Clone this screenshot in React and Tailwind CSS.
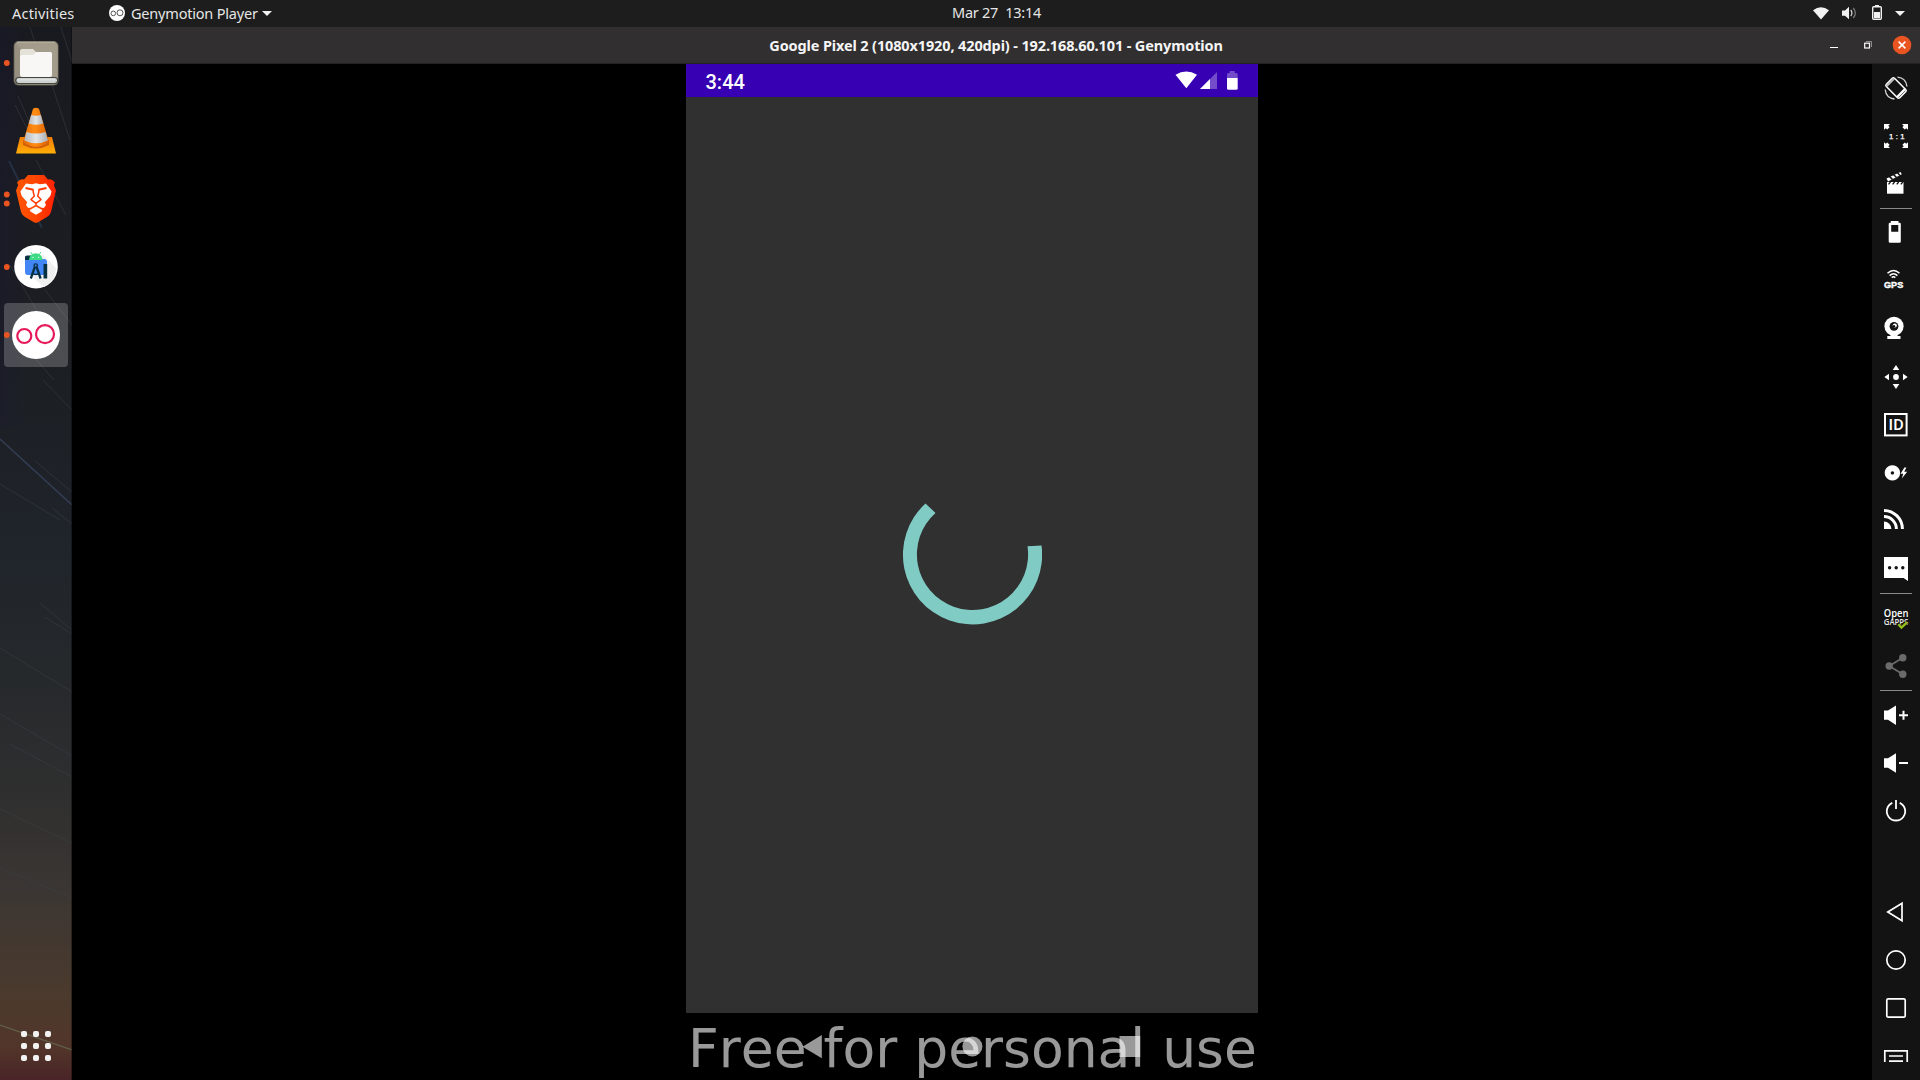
import React from "react";

const W = "#ffffff";

/* ---------- top panel ---------- */

function TopBar() {
  return (
    <header className="grid h-[27px] shrink-0 grid-cols-[1fr_auto_1fr] items-center bg-[#1d1d1d] text-[14.5px] leading-none text-[#e6e6e6]">
      <div className="flex items-center">
        <span className="-mt-px ml-3 w-[97px] whitespace-nowrap tracking-[0.2px]">Activities</span>
        <svg className="-mt-px h-4 w-4" viewBox="0 0 16 16">
          <circle cx="8" cy="8" r="8" fill="#fff" />
          <circle cx="4.3" cy="8.4" r="2.3" fill="none" stroke="#444" strokeWidth="0.9" />
          <circle cx="11" cy="7.8" r="3" fill="none" stroke="#444" strokeWidth="0.9" />
        </svg>
        <span className="-mt-px ml-1.5 w-[131px] whitespace-nowrap tracking-[-0.2px]">Genymotion Player</span>
        <svg className="h-[5px] w-[10px]" viewBox="0 0 10 5"><path d="M0 0H10L5 5Z" fill="#f2f2f2" /></svg>
      </div>
      <span className="-mt-[2px] mr-[-73px] whitespace-pre tracking-[-0.25px]">Mar 27  13:14</span>
      <svg className="ml-auto h-[27px] w-[120px]" viewBox="1800 0 120 27" fill="#f2f2f2">
        <path d="M1813 10.3Q1821 4 1829 10.3L1821 19.5Z" />
        <path d="M1842 10.5H1845L1849 6.8V19.2L1845 15.8H1842Z" />
        <path d="M1850.8 10Q1853 13 1850.8 16" fill="none" stroke="#cfcfcf" strokeWidth="1.3" />
        <path d="M1853.3 8Q1857.4 13 1853.3 18" fill="none" stroke="#777" strokeWidth="1.3" />
        <rect x="1872.7" y="6.7" width="8.6" height="12.6" rx="1" fill="none" stroke="#f2f2f2" strokeWidth="1.4" />
        <rect x="1875" y="5" width="4" height="2" />
        <rect x="1874" y="12" width="6" height="6" />
        <path d="M1895 11H1905L1900 16Z" />
      </svg>
    </header>
  );
}

/* ---------- dock ---------- */

function DockSky() {
  return (
    <svg className="absolute inset-0 h-full w-full" viewBox="0 27 72 1053" fill="none">
      <defs>
        <linearGradient id="sky" x1="0" y1="0" x2="0" y2="1">
          <stop offset="0" stopColor="#191a20" />
          <stop offset="0.3" stopColor="#1b1e23" />
          <stop offset="0.5" stopColor="#20252b" />
          <stop offset="0.62" stopColor="#26292c" />
          <stop offset="0.73" stopColor="#2f2f2f" />
          <stop offset="0.82" stopColor="#3b3633" />
          <stop offset="0.92" stopColor="#4b3a2d" />
          <stop offset="0.97" stopColor="#52352a" />
          <stop offset="1" stopColor="#4a2427" />
        </linearGradient>
        <linearGradient id="skyLeft" x1="0" y1="0" x2="1" y2="0">
          <stop offset="0" stopColor="#1a1830" stopOpacity="0.4" />
          <stop offset="0.35" stopColor="#1a1830" stopOpacity="0" />
        </linearGradient>
      </defs>
      <rect y="27" width="72" height="1053" fill="url(#sky)" />
      <rect y="27" width="72" height="400" fill="url(#skyLeft)" />
      <g stroke="#3d4148" strokeWidth="1" opacity="0.5">
        <path d="M30 27L40 58M61 27L72 62M18 96L32 128M15 105L38 150M52 85L70 140M36 160L66 215M10 265L60 350M45 290L72 325M28 350L54 380" />
        <path d="M43 380L72 410M35 461L72 492M52 508L72 524M0 484L60 520M40 603L72 630M45 617L72 634M0 648L72 692" />
        <path d="M0 714L72 756M10 744L72 777M0 809L72 843M0 868L72 898" />
      </g>
      <path d="M9 161L42 228" stroke="#2d4560" strokeWidth="2" opacity="0.5" />
      <path d="M0 439L72 505" stroke="#353e57" strokeWidth="1.3" />
      <path d="M0 1025L72 1050" stroke="#625f4a" strokeWidth="1.2" />
      <rect x="71" y="27" width="1" height="1053" fill="#000" fillOpacity="0.35" />
    </svg>
  );
}

function DockItem({ dots = [], active = false, children }) {
  return (
    <svg className="h-[68px] w-[72px] shrink-0" viewBox="0 0 72 68">
      {active && <rect x="4" y="2" width="64" height="64" rx="4" fill="#fff" fillOpacity="0.21" />}
      {children}
      {dots.map((y) => (
        <circle key={y} cx="6.8" cy={y} r="2.9" fill="#e95420" />
      ))}
    </svg>
  );
}

function Dock() {
  return (
    <aside className="relative flex w-[72px] shrink-0 flex-col pt-[2px]">
      <DockSky />
      <div className="relative flex flex-1 flex-col">
        <DockItem dots={[34]}>
          <defs>
            <linearGradient id="filesBg" x1="0" y1="1" x2="1" y2="0">
              <stop offset="0.48" stopColor="#979080" />
              <stop offset="0.52" stopColor="#a49c8b" />
            </linearGradient>
          </defs>
          <rect x="13.6" y="12" width="45" height="44.6" rx="5" fill="#5f5c50" />
          <rect x="14.4" y="12.8" width="43.4" height="43" rx="4.4" fill="url(#filesBg)" />
          <path d="M17 13.2H55" stroke="#c1baa9" strokeWidth="0.8" />
          <path d="M20 22Q20 20 22 20H33L36 23H50Q52 23 52 25V30H20Z" fill="#e4e1d8" />
          <path d="M20 27.5Q20 26 22 26H33L36.5 23H50Q52 23 52 25V45.5Q52 48 50 48H22Q20 48 20 45.5Z" fill="#f8f7f6" />
          <rect x="15.7" y="48.5" width="42" height="6" rx="3" fill="#cdd1d0" stroke="#45463f" strokeWidth="1.2" />
          <rect x="18" y="50" width="37" height="1.5" fill="#dde0df" />
        </DockItem>
        <DockItem>
          <defs>
            <linearGradient id="coneO" x1="0" x2="1" y1="0" y2="0">
              <stop offset="0" stopColor="#e36b05" />
              <stop offset="0.45" stopColor="#ff8d14" />
              <stop offset="1" stopColor="#d95f02" />
            </linearGradient>
            <linearGradient id="coneBase" x1="0" x2="0" y1="0" y2="1">
              <stop offset="0" stopColor="#f27c05" />
              <stop offset="1" stopColor="#ffae08" />
            </linearGradient>
            <linearGradient id="coneW" x1="0" x2="1" y1="0" y2="0">
              <stop offset="0" stopColor="#b5b9bc" />
              <stop offset="0.5" stopColor="#e2e4e6" />
              <stop offset="1" stopColor="#a9adb0" />
            </linearGradient>
          </defs>
          <path d="M20 40H52L56 56.5H16Z" fill="url(#coneBase)" />
          <path d="M23 43H49V48Q36 55 23 48Z" fill="#d2600b" />
          <path d="M33 11.8Q36 9.8 39 11.8L49 45Q36 54.5 23 45Z" fill="url(#coneO)" />
          <path d="M31.2 18Q36 19.4 40.8 18L43.3 26.6Q36 29 28.7 26.6Z" fill="url(#coneW)" />
          <path d="M26.5 35Q36 38 45.5 35L48 43.5Q36 49 24.3 43.5Z" fill="url(#coneW)" />
        </DockItem>
        <DockItem dots={[29.5, 38.5]}>
          <defs>
            <linearGradient id="brave" x1="0" x2="1" y1="0" y2="0">
              <stop offset="0" stopColor="#ff5601" />
              <stop offset="0.5" stopColor="#ff4500" />
              <stop offset="1" stopColor="#ff1f02" />
            </linearGradient>
          </defs>
          <path d="M28 10H44L48 14.5Q52 13.5 55 17.5L53.8 20L56 25.5L51 47Q50 50 47 52L38 57.2Q36 58.4 34 57.2L25 52Q22 50 21 47L16 25.5L18.2 20L17 17.5Q20 13.5 24 14.5Z" fill="url(#brave)" />
          <path d="M26 18.6L32 19.2L36 18.2L40 19.2L46 18.6L51.6 26.5L50.3 31L44.8 37.2L46 40L43.8 43L41 42.6L36 39.6L31 42.6L28.2 43L26 40L27.2 37.2L21.7 31L20.4 26.5Z" fill="#fff" />
          <path d="M29.8 45L36 41.6L42.2 45L41.6 46.5L36 49.8L30.4 46.5Z" fill="#fff" />
          <g fill="none" stroke="#ff3d0a" strokeLinejoin="round">
            <path d="M33.2 24.5L33.2 27L34.3 31L31 34.6L36 38.4L41 34.6L37.7 31L38.8 27L38.8 24.5" strokeWidth="1.5" />
            <path d="M25.5 23L33.4 24.8M46.5 23L38.6 24.8" strokeWidth="2.2" />
            <path d="M36 37.5V40" strokeWidth="1.4" />
          </g>
        </DockItem>
        <DockItem dots={[34]}>
          <circle cx="36" cy="33.7" r="21.8" fill="#fff" />
          <path d="M42 21L56 35Q56 48 44 54L30 42Z" fill="#f0f0f0" />
          <path d="M25 24Q25 22.5 27 22.5H31V27H25Z" fill="#073042" />
          <path d="M25 27H31L34 26H44Q47 26 47 29V39Q47 42 44 42H28Q25 42 25 39Z" fill="#4285f4" />
          <path d="M29 27Q29.5 20.5 35.8 20.3Q42 20.5 42.5 27Z" fill="#3ddc84" />
          <path d="M30.7 19L32.4 21.7M40.8 19L39.2 21.7" stroke="#3ddc84" strokeWidth="0.9" />
          <circle cx="33" cy="24.4" r="0.6" fill="#fff" /><circle cx="38.6" cy="24.4" r="0.6" fill="#fff" />
          <rect x="43.5" y="31" width="3.7" height="14.5" fill="#073042" />
          <g fill="none" stroke="#073042">
            <circle cx="35.7" cy="32.5" r="1.7" strokeWidth="1.3" />
            <path d="M34.8 34L30.8 45.5M36.6 34L40.6 45.5" strokeWidth="2.3" />
            <path d="M32 40Q35.7 43 39.4 40" strokeWidth="1.6" />
          </g>
        </DockItem>
        <DockItem dots={[34]} active>
          <circle cx="36" cy="34" r="24" fill="#fff" />
          <g fill="none" stroke="#e6195a" strokeWidth="2.2">
            <circle cx="24.3" cy="35" r="7" />
            <circle cx="45" cy="33.2" r="9" />
          </g>
        </DockItem>
        <div className="mx-auto mb-[19px] mt-auto grid grid-cols-3 gap-[6px]">
          {Array.from({ length: 9 }, (_, i) => (
            <span key={i} className="h-1.5 w-1.5 rounded-[2px] bg-[#f2f2f2]" />
          ))}
        </div>
      </div>
    </aside>
  );
}

/* ---------- window title bar ---------- */

function TitleBar() {
  return (
    <div className="grid h-[37px] shrink-0 grid-cols-[1fr_auto_1fr] items-center border-b border-[#232122] bg-[#322f30]">
      <span />
      <h1 className="mt-px whitespace-nowrap text-[14.5px] font-bold leading-none tracking-[-0.13px] text-[#f5f5f5]">
        Google Pixel 2 (1080x1920, 420dpi) - 192.168.60.101 - Genymotion
      </h1>
      <svg className="ml-auto h-[36px] w-[120px]" viewBox="1800 27 120 36" fill="none">
        <path d="M1830 47.5H1838" stroke="#fff" />
        <path d="M1866 41.5H1871.5V47" stroke="#8f8d8e" />
        <rect x="1864.7" y="43.2" width="4.8" height="4.8" stroke="#fff" strokeWidth="1.2" />
        <circle cx="1902" cy="45" r="9.3" fill="#e95420" />
        <path d="M1898.6 41.6L1905.4 48.4M1905.4 41.6L1898.6 48.4" stroke="#fff" strokeWidth="1.5" />
      </svg>
    </div>
  );
}

/* ---------- phone ---------- */

function Phone() {
  return (
    <section className="flex w-[572px] flex-col">
      <div className="flex h-[33px] items-center justify-between bg-[#3700b3] pl-[19.5px]">
        <span className="mt-0.5 font-[Roboto] text-[20px] font-medium leading-none text-white">3:44</span>
        <svg className="h-[33px] w-[98px]" viewBox="1160 64 98 33" fill="#fff">
          <path d="M1175.5 74.7Q1186.3 68.2 1197 74.7L1186.3 88.3Z" />
          <path d="M1217 72V89H1200Z" fillOpacity="0.3" />
          <path d="M1210 79V89H1200Z" />
          <path d="M1227 74.5Q1227 73 1228.5 73H1229.7V71H1234.7V73H1236.3Q1237.7 73 1237.7 74.5V78H1227Z" fillOpacity="0.3" />
          <path d="M1227 78H1237.7V88.4Q1237.7 89.8 1236.3 89.8H1228.5Q1227 89.8 1227 88.4Z" />
        </svg>
      </div>
      <div className="flex h-[916px] items-center justify-center bg-[#303030]">
        <svg className="h-[140px] w-[140px]" viewBox="902.2 484.8 140 140">
          <path
            d="M1041.7 545.2A69.6 69.6 0 1 1 925.7 503.3L935.7 512.7A55.6 55.6 0 1 0 1027.7 546Z"
            fill="#80cbc4"
          />
        </svg>
      </div>
      <div className="relative h-[67px] bg-black">
        <svg className="absolute inset-0 h-full w-full" viewBox="686 1013 572 67" fill="#fff" fillOpacity="0.6">
          <path d="M802.5 1046.7L821.8 1035V1058.3Z" />
          <circle cx="972.4" cy="1046.5" r="10" />
          <rect x="1119.5" y="1036" width="20.7" height="21" />
        </svg>
        <p className="absolute left-0 top-[4px] whitespace-nowrap pl-0.5 font-['DejaVu_Sans'] text-[53.5px] leading-[64px] text-white/60 [font-kerning:none]">
          Free for personal use
        </p>
      </div>
    </section>
  );
}

/* ---------- emulator toolbar ---------- */

function Tool({ children }) {
  return (
    <svg className="h-12 w-12 shrink-0" viewBox="0 0 48 48" fill="none">
      {children}
    </svg>
  );
}

function Separator() {
  return <div className="mx-2 h-px shrink-0 bg-[#8a8a8a]" />;
}

function Toolbar() {
  return (
    <aside className="flex w-12 shrink-0 flex-col bg-[#131313]">
      <Tool>
        <g transform="rotate(-45 24 24)">
          <rect x="18.2" y="14.5" width="11.6" height="19" rx="1.6" stroke={W} strokeWidth="1.5" />
          <path d="M18.5 31.2H29.5" stroke={W} strokeWidth="2.4" />
          <path d="M18.5 16H29.5" stroke="#bbb" strokeWidth="2" />
        </g>
        <path d="M25.5 13.2Q34 14 35 22.5M22.5 35Q14 34 13.2 25.5" stroke="#d8d8d8" strokeWidth="1.3" />
      </Tool>
      <Tool>
        <g fill={W}>
          <path d="M12 12H18L16.3 13.8L17.6 15.2L15.2 17.4L13.8 16.2L12 17.8Z" />
          <path d="M36 12H30L31.7 13.8L30.4 15.2L32.8 17.4L34.2 16.2L36 17.8Z" />
          <path d="M12 36H18L16.3 34.2L17.6 32.8L15.2 30.6L13.8 31.8L12 30.2Z" />
          <path d="M36 36H30L31.7 34.2L30.4 32.8L32.8 30.6L34.2 31.8L36 30.2Z" />
          <text x="17" y="26.8" fontFamily="Liberation Sans" fontSize="7.8" textLength="15.5" stroke={W} strokeWidth="0.25">1 : 1</text>
        </g>
      </Tool>
      <Tool>
        <path d="M15 22H31.5V33.7H15Z" fill={W} />
        <path d="M14.5 18.5L28.5 12L29.8 14.2L16 21.4Z" fill={W} />
        <path d="M17.4 16.4L20.4 19.4M21.5 14.5L24.5 17.5M25.5 12.7L28 15.4" stroke="#131313" strokeWidth="1.5" />
        <path d="M16.5 24.4L18.5 22M20.6 24.4L22.6 22M24.7 24.4L26.7 22M28.8 24.4L30.8 22" stroke="#131313" strokeWidth="1.3" />
      </Tool>
      <Separator />
      <Tool>
        <path fillRule="evenodd" d="M18.8 12H26.5V13.8H27.5Q28.8 13.8 28.8 15V32.5Q28.8 33.8 27.5 33.8H18Q16.7 33.8 16.7 32.5V15Q16.7 13.8 18 13.8H18.8ZM19.2 16V22.8H26.3V16Z" fill={W} />
      </Tool>
      <Tool>
        <path d="M15.5 16.3Q21.5 10.7 27.5 16.3M17.6 18.6Q21.5 14.8 25.4 18.6M19.7 20.6Q21.5 19 23.3 20.6" stroke={W} strokeWidth="1.5" />
        <text x="12" y="30.7" fontFamily="Liberation Sans" fontWeight="bold" fontSize="8.6" textLength="19.2" lengthAdjust="spacingAndGlyphs" fill={W} stroke={W} strokeWidth="0.4">GPS</text>
      </Tool>
      <Tool>
        <circle cx="22" cy="21.3" r="9.6" fill={W} />
        <circle cx="22" cy="21.3" r="4.4" fill="#131313" />
        <circle cx="22.8" cy="20.5" r="2.1" fill={W} />
        <circle cx="22" cy="21.3" r="1.2" fill="#131313" />
        <path d="M18.5 29H25.5V31H28.5V34H15.3V31H18.5Z" fill={W} />
      </Tool>
      <Tool>
        <g fill={W}>
          <circle cx="24" cy="24" r="2.9" />
          <path d="M24 12L27.3 17H20.7ZM24 36L27.3 31H20.7ZM12.3 24L17 20.8V27.2ZM35.7 24L31 20.8V27.2Z" />
        </g>
      </Tool>
      <Tool>
        <rect x="13" y="13" width="21.6" height="21.4" stroke={W} strokeWidth="2" />
        <text x="16.6" y="29.4" fontFamily="Roboto" fontWeight="500" fontSize="15.5" textLength="15" lengthAdjust="spacingAndGlyphs" fill={W}>ID</text>
      </Tool>
      <Tool>
        <path fillRule="evenodd" d="M20.4 16.2A7.7 7.7 0 1 1 20.39 16.2ZM20.4 22.2A1.7 1.7 0 1 0 20.41 22.2Z" fill={W} />
        <path d="M32.4 18.6L28.5 24.8H31.3L29.8 29.4L35.2 22.8H32.2L34.4 18.6Z" fill={W} />
      </Tool>
      <Tool>
        <g stroke={W} strokeWidth="3">
          <path d="M12 13.4A18.6 18.6 0 0 1 30.4 32" />
          <path d="M12 19.6A12.4 12.4 0 0 1 24.4 32" />
        </g>
        <path d="M12 24.6A7.4 7.4 0 0 1 19.4 32H12Z" fill={W} />
      </Tool>
      <Tool>
        <path d="M12 12H36V36L31.6 33H12Z" fill={W} />
        <g fill="#131313"><circle cx="17.6" cy="22.7" r="1.7" /><circle cx="24.2" cy="22.7" r="1.7" /><circle cx="30.8" cy="22.7" r="1.7" /></g>
      </Tool>
      <Separator />
      <Tool>
        <text x="11.8" y="22.8" fontFamily="Open Sans" fontWeight="600" fontSize="10" textLength="24.6" lengthAdjust="spacingAndGlyphs" fill={W}>Open</text>
        <text x="11.8" y="31" fontFamily="Open Sans" fontWeight="600" fontSize="8" textLength="24.6" lengthAdjust="spacingAndGlyphs" fill="#e8e8e8">GAPPS</text>
        <path d="M26.3 30.3L29.4 33.6L35 28.3" stroke="#131313" strokeWidth="3" />
        <path d="M26.3 30.3L29.4 33.6L35 28.3" stroke="#95c11f" strokeWidth="2.3" />
      </Tool>
      <Tool>
        <g fill="#6b6b6b"><circle cx="30.8" cy="15.8" r="3.7" /><circle cx="30.8" cy="32.2" r="3.7" /><circle cx="17.2" cy="24" r="3.7" /></g>
        <path d="M30.8 15.8L17.2 24L30.8 32.2" stroke="#6b6b6b" strokeWidth="1.7" />
      </Tool>
      <Separator />
      <Tool>
        <path d="M12 19.5H16L24 14.5V34L16 28.7H12Z" fill={W} />
        <path d="M27 24.3H36M31.5 19.8V28.8" stroke={W} strokeWidth="2" />
      </Tool>
      <Tool>
        <path d="M12 19.3H16L24 14.2V33.8L16 28.7H12Z" fill={W} />
        <path d="M27 24H36" stroke={W} strokeWidth="2" />
      </Tool>
      <Tool>
        <path d="M20.3 15.9A9.2 9.2 0 1 0 27.7 15.9M24 13V22" stroke={W} strokeWidth="1.8" />
      </Tool>
      <div className="flex-1" />
      <Tool><path d="M15.8 24L30 15.2V32.8Z" stroke={W} strokeWidth="1.7" /></Tool>
      <Tool><circle cx="24" cy="24" r="9.2" stroke={W} strokeWidth="1.7" /></Tool>
      <Tool><rect x="14.8" y="14.8" width="18.4" height="18.4" rx="1.5" stroke={W} strokeWidth="1.7" /></Tool>
      <Tool>
        <path d="M12.8 30V18.9H35.2V30M17 24H31M17 29.2H31" stroke={W} strokeWidth="1.7" />
      </Tool>
    </aside>
  );
}

export default function App() {
  return (
    <div className="flex h-[1080px] w-[1920px] flex-col overflow-hidden bg-black font-['Noto_Sans','Open_Sans',sans-serif]">
      <TopBar />
      <div className="flex min-h-0 flex-1">
        <Dock />
        <div className="flex min-w-0 flex-1 flex-col">
          <TitleBar />
          <div className="flex min-h-0 flex-1">
            <main className="flex flex-1 justify-center">
              <Phone />
            </main>
            <Toolbar />
          </div>
        </div>
      </div>
    </div>
  );
}
